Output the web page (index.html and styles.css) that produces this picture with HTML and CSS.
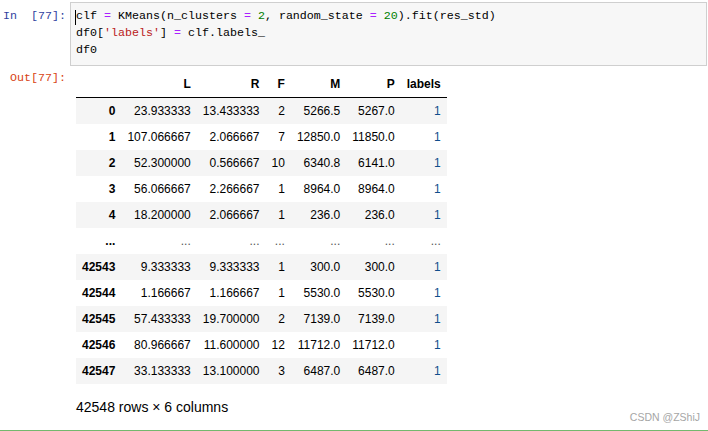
FILE: index.html
```html
<!DOCTYPE html>
<html>
<head>
<meta charset="utf-8">
<link rel="stylesheet" href="styles.css">
</head>
<body>
<div class="page">
  <div class="cell">
    <div class="prompt in">In&nbsp;&nbsp;[77]:</div>
    <div class="code"><span class="cursor"></span>
      <div class="line">clf <span class="op">=</span> KMeans(n_clusters <span class="op">=</span> <span class="num">2</span>, random_state <span class="op">=</span> <span class="num">20</span>).fit(res_std)</div>
      <div class="line">df0[<span class="str">'labels'</span>] <span class="op">=</span> clf.labels_</div>
      <div class="line">df0</div>
    </div>
  </div>
  <div class="cell out-cell">
    <div class="prompt out">Out[77]:</div>
    <div class="output">
      <table class="df">
        <thead>
          <tr><th></th><th>L</th><th>R</th><th>F</th><th>M</th><th>P</th><th>labels</th></tr>
        </thead>
        <tbody>
          <tr><th>0</th><td>23.933333</td><td>13.433333</td><td>2</td><td>5266.5</td><td>5267.0</td><td class="lab">1</td></tr>
          <tr><th>1</th><td>107.066667</td><td>2.066667</td><td>7</td><td>12850.0</td><td>11850.0</td><td class="lab">1</td></tr>
          <tr><th>2</th><td>52.300000</td><td>0.566667</td><td>10</td><td>6340.8</td><td>6141.0</td><td class="lab">1</td></tr>
          <tr><th>3</th><td>56.066667</td><td>2.266667</td><td>1</td><td>8964.0</td><td>8964.0</td><td class="lab">1</td></tr>
          <tr><th>4</th><td>18.200000</td><td>2.066667</td><td>1</td><td>236.0</td><td>236.0</td><td class="lab">1</td></tr>
          <tr class="ell"><th>...</th><td>...</td><td>...</td><td>...</td><td>...</td><td>...</td><td>...</td></tr>
          <tr><th>42543</th><td>9.333333</td><td>9.333333</td><td>1</td><td>300.0</td><td>300.0</td><td class="lab">1</td></tr>
          <tr><th>42544</th><td>1.166667</td><td>1.166667</td><td>1</td><td>5530.0</td><td>5530.0</td><td class="lab">1</td></tr>
          <tr><th>42545</th><td>57.433333</td><td>19.700000</td><td>2</td><td>7139.0</td><td>7139.0</td><td class="lab">1</td></tr>
          <tr><th>42546</th><td>80.966667</td><td>11.600000</td><td>12</td><td>11712.0</td><td>11712.0</td><td class="lab">1</td></tr>
          <tr><th>42547</th><td>33.133333</td><td>13.100000</td><td>3</td><td>6487.0</td><td>6487.0</td><td class="lab">1</td></tr>
        </tbody>
      </table>
      <p class="shape">42548 rows × 6 columns</p>
    </div>
  </div>
  <div class="watermark">CSDN @ZShiJ</div>
  <div class="bottom-line"></div>
</div>
</body>
</html>
```

FILE: styles.css
```css
html, body {
  margin: 0;
  padding: 0;
  background: #ffffff;
}
.page {
  position: relative;
  width: 708px;
  height: 431px;
  overflow: hidden;
}
.cell {
  display: flex;
  align-items: flex-start;
  padding-top: 2px;
}
.prompt {
  width: 66px;
  flex: none;
  text-align: right;
  font-family: "Liberation Mono", monospace;
  font-size: 11.67px;
  line-height: 17px;
  white-space: nowrap;
  padding-top: 6px;
}
.prompt.in { color: #303f9f; }
.prompt.out { color: #d84315; padding-top: 4px; }
.code {
  position: relative;
  margin-left: 4px;
  width: 626px;
  border: 1px solid #cfcfcf;
  background: #f7f7f7;
  padding: 5px 4px 6px 5px;
}
.code .line {
  font-family: "Liberation Mono", monospace;
  font-size: 11.67px;
  line-height: 17px;
  height: 17px;
  white-space: pre;
  color: #000;
}
.cursor {
  position: absolute;
  left: 4px;
  top: 7px;
  width: 1px;
  height: 15px;
  background: #000;
}
.op { color: #aa22ff; }
.num { color: #008000; }
.str { color: #ba2121; }
.out-cell { padding-top: 0; }
.output {
  margin-left: 10px;
  padding-top: 5px;
}
.df {
  border-collapse: collapse;
  border-spacing: 0;
  font-family: "Liberation Sans", Arial, sans-serif;
  font-size: 12px;
  color: #000;
}
.df th, .df td {
  padding: 6px 6px;
  line-height: 14px;
  text-align: right;
  vertical-align: middle;
  white-space: nowrap;
}
.df th { font-weight: bold; }
.df thead th { border-bottom: 1px solid #000; }
.df tbody tr:nth-child(odd) { background: #f5f5f5; }
.df td.lab { color: #104d8c; }
.df tr.ell td { color: #555; }
.shape {
  margin: 15px 0 0 0;
  font-family: "Liberation Sans", Arial, sans-serif;
  font-size: 14px;
  line-height: 17px;
  color: #000;
}
.watermark {
  position: absolute;
  right: 8px;
  top: 410px;
  font-family: "Liberation Sans", Arial, sans-serif;
  font-size: 10.5px;
  line-height: 14px;
  color: #a6a6a6;
}
.bottom-line {
  position: absolute;
  left: 0;
  right: 0;
  bottom: 0;
  height: 1px;
  background: #74b86e;
}
```
